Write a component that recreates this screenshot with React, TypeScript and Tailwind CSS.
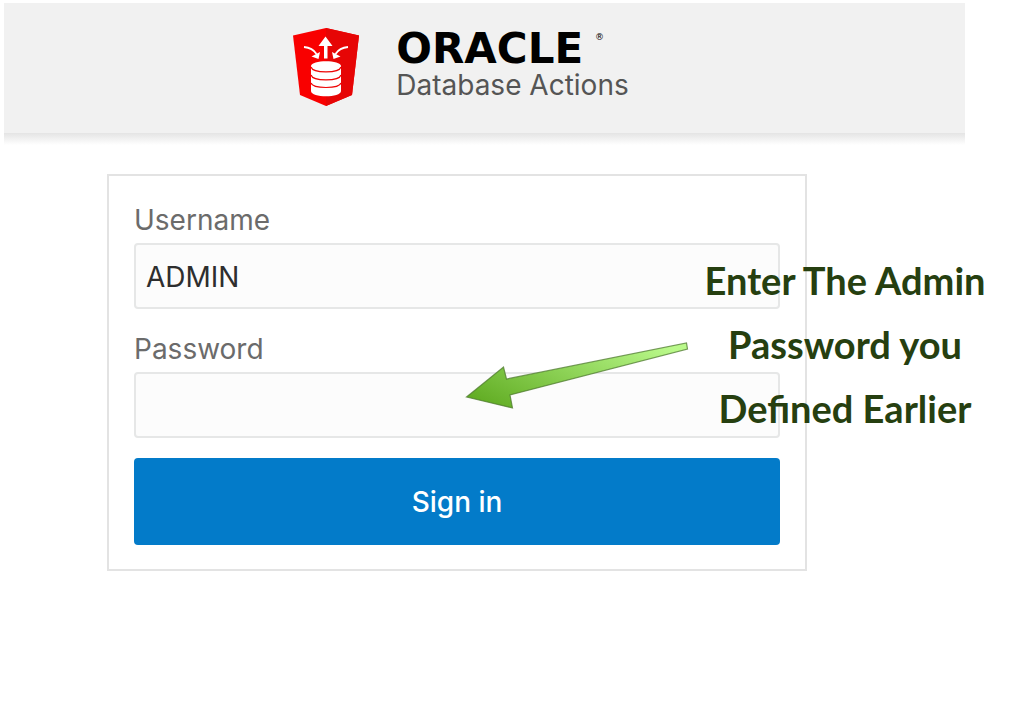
import React from "react";

function ShieldLogo() {
  return (
    <svg width="68" height="80" viewBox="0 0 68 80" aria-hidden="true" className="shrink-0">
      <path d="M34 1 L67 8.500 L60 68 L34 79 L8 68 L1 8.500 Z" fill="#f90000" />
      <path d="M34 1 L67 8.500 L60 68 L34 79 Z" fill="#e60505" />
      <path d="M19 39 C19 32.500 49 32.500 49 39 V64 C49 71 19 71 19 64 Z" fill="#fff" />
      <g fill="none" stroke="#ee0505" strokeWidth="1.2">
        <path d="M19 40 C21 46.500 47 46.500 49 40" />
        <path d="M19 48 C21 54.500 47 54.500 49 48" />
        <path d="M19 56 C21 62 47 62 49 56" />
      </g>
      <path d="M32 31.500 V19 H26.500 L33.500 9.500 L40.500 19 H35.500 V31.500 Z" fill="#fff" />
      <g fill="none" stroke="#fff" strokeWidth="1.8">
        <path d="M12 20 C18 20.500 22 23 24.500 27" />
        <path d="M56 20 C50 20.500 46 23 43.500 27" />
      </g>
      <path d="M28 25 L26.500 32 L19.500 29.500 Z M40 25 L41.500 32 L48.500 29.500 Z" fill="#fff" />
    </svg>
  );
}

function Arrow() {
  return (
    <svg
      width="250"
      height="95"
      viewBox="0 0 250 95"
      aria-hidden="true"
      className="pointer-events-none absolute left-[346px] top-[149px]"
    >
      <defs>
        <linearGradient id="arrowFill" x1="0" y1="0.8" x2="1" y2="0.2">
          <stop offset="0" stopColor="#62ad24" />
          <stop offset="1" stopColor="#baf98b" />
        </linearGradient>
      </defs>
      <path
        d="M11.500 72 L48.500 42 L51.500 54 L231.500 18 L232.500 24 L55 70 L57.500 83 Z"
        fill="url(#arrowFill)"
        stroke="#4d7a2d"
        strokeOpacity="0.75"
        strokeWidth="1.2"
      />
    </svg>
  );
}

const labelClass = "mb-[3px] block text-[28px] leading-10 text-[#6b6b6b]";
const inputClass =
  "block h-[66px] w-full rounded border-2 border-[#e6e7e7] bg-[#fcfcfc] px-[10px] pt-[2px] text-[28px] text-[#2e2e2e] outline-none";

export default function App() {
  return (
    <div className="min-h-screen overflow-x-hidden bg-white pl-1 pr-[59px] pt-[3px] font-['Inter','Liberation_Sans',sans-serif]">
      <header className="flex h-[130px] items-center justify-center gap-9 bg-[#f1f1f1] pb-[2px] pr-[48px]">
        <ShieldLogo />
        <div>
          <div className="flex items-start whitespace-nowrap font-['DejaVu_Sans','Liberation_Sans',sans-serif] text-black">
            <span className="text-[42px] font-bold leading-9">ORACLE</span>
            <span className="ml-3 text-[9px] leading-3">®</span>
          </div>
          <h1 className="whitespace-nowrap text-[28px] leading-9 text-[#555]">Database Actions</h1>
        </div>
      </header>
      <div className="h-3 bg-linear-to-b from-[#e4e4e4] to-white" />

      <main className="ml-[103px] mt-[29px]">
        <form
          className="relative w-full max-w-[700px] border-2 border-[#e3e3e3] px-[25px] py-6"
          onSubmit={(e) => e.preventDefault()}
        >
          <label htmlFor="username" className={labelClass}>
            Username
          </label>
          <input id="username" type="text" defaultValue="ADMIN" className={inputClass} />
          <label htmlFor="password" className={`mt-5 ${labelClass}`}>
            Password
          </label>
          <input id="password" type="password" className={inputClass} />
          <button
            type="submit"
            className="mt-5 h-[87px] w-full rounded bg-[#037bc9] text-[28px] font-medium text-white"
          >
            Sign in
          </button>

          <Arrow />
          <p className="pointer-events-none absolute left-[586px] top-[72px] w-[300px] whitespace-nowrap text-center font-['Lato','Liberation_Sans',sans-serif] text-[38px] font-bold leading-16 text-[#263f10]">
            Enter The Admin
            <br />
            Password you
            <br />
            Defined Earlier
          </p>
        </form>
      </main>
    </div>
  );
}
